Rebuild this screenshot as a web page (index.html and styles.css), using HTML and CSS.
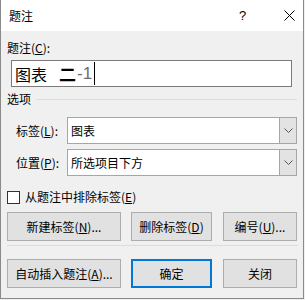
FILE: index.html
```html
<!DOCTYPE html>
<html>
<head>
<meta charset="utf-8">
<link rel="stylesheet" href="styles.css">
</head>
<body>
<div class="window">
  <div class="titlebar">
    <span class="title">题注</span>
    <span class="help">?</span>
    <svg class="close" width="11" height="11" viewBox="0 0 11 11"><path d="M0.5 0.5 L10.5 10.5 M10.5 0.5 L0.5 10.5" stroke="#000" stroke-width="1" fill="none"/></svg>
  </div>
  <div class="content">
    <div class="label-top">题注(<u>C</u>):</div>
    <div class="caption-box"><span class="cap-main">图表</span><span class="cap-bold">二</span><span class="cap-num">-1</span><span class="caret"></span></div>
    <div class="group-head"><span>选项</span><span class="group-line"></span></div>
    <div class="field-row first">
      <span class="field-label">标签(<u>L</u>):</span>
      <div class="combo"><span class="combo-text">图表</span><span class="combo-btn"><svg width="9" height="5" viewBox="0 0 9 5"><polyline points="0.5,0.5 4.5,4.5 8.5,0.5" fill="none" stroke="#555" stroke-width="1"/></svg></span></div>
    </div>
    <div class="field-row second">
      <span class="field-label">位置(<u>P</u>):</span>
      <div class="combo"><span class="combo-text">所选项目下方</span><span class="combo-btn"><svg width="9" height="5" viewBox="0 0 9 5"><polyline points="0.5,0.5 4.5,4.5 8.5,0.5" fill="none" stroke="#555" stroke-width="1"/></svg></span></div>
    </div>
    <div class="check-row"><span class="checkbox"></span><span>从题注中排除标签(<u>E</u>)</span></div>
    <div class="btn-row top">
      <button class="btn wide">新建标签(<u>N</u>)...</button>
      <button class="btn mid">删除标签(<u>D</u>)</button>
      <button class="btn narrow">编号(<u>U</u>)...</button>
    </div>
    <div class="sep"></div>
    <div class="btn-row bottom">
      <button class="btn wide">自动插入题注(<u>A</u>)...</button>
      <button class="btn mid default">确定</button>
      <button class="btn narrow">关闭</button>
    </div>
  </div>
</div>
</body>
</html>
```
FILE: styles.css
```css
* { box-sizing: border-box; }
html, body { margin: 0; padding: 0; background: #f0f0f0; }
body {
  width: 305px;
  height: 300px;
  overflow: hidden;
  font-family: "Noto Sans CJK SC", "Noto Sans", sans-serif;
  font-size: 12px;
  color: #000;
}
.window {
  width: 304px;
  height: 299px;
  background: #f0f0f0;
  border-left: 1px solid #8a8a8a;
  border-right: 1px solid #8a8a8a;
  border-bottom: 1px solid #8a8a8a;
}
.titlebar {
  height: 31px;
  background: #fff;
  display: flex;
  align-items: center;
  position: relative;
}
.title { margin-left: 8px; font-size: 12px; line-height: 16px; }
.help {
  margin-left: 206px;
  font-family: "Liberation Sans", sans-serif;
  font-size: 13px;
  line-height: 16px;
}
.close { margin-left: 38px; }
.content { padding: 0 6px 0 6px; }
.label-top { margin-top: 9px; line-height: 16px; }
.caption-box {
  margin-top: 4px;
  margin-left: 4px;
  width: 281px;
  height: 27px;
  background: #fff;
  border: 1px solid #7a7a7a;
  display: flex;
  align-items: center;
  padding-left: 3px;
  font-size: 16px;
  line-height: 22px;
}
.cap-bold { margin-left: 12px; font-weight: bold; font-size: 17px; }
.cap-num { color: #6d6d6d; margin-left: 1px; font-family: "Liberation Sans", sans-serif; font-size: 17px; }
.caret { display: inline-block; width: 1px; height: 23px; background: #000; margin-left: 2px; }
.group-head {
  margin-top: 4px;
  display: flex;
  align-items: center;
  line-height: 16px;
}
.group-line { flex: 1; height: 1px; background: #dcdcdc; margin-left: 5px; margin-right: 0; }
.field-row { display: flex; align-items: center; padding-left: 9px; }
.field-row.first { margin-top: 10px; }
.field-row.second { margin-top: 5px; }
.field-label { width: 51px; line-height: 16px; }
.combo {
  width: 230px;
  height: 27px;
  background: #fff;
  border: 1px solid #a6a6a6;
  display: flex;
  align-items: center;
}
.combo-text { flex: 1; padding-left: 3px; line-height: 16px; }
.combo-btn {
  width: 17px;
  height: 25px;
  background: #e3e3e3;
  border-left: 1px solid #a6a6a6;
  display: flex;
  align-items: center;
  justify-content: center;
}
.check-row { margin-top: 13px; display: flex; align-items: center; line-height: 16px; }
.checkbox {
  width: 13px; height: 13px;
  border: 1px solid #333;
  background: #fff;
  margin-right: 5px;
}
.btn-row { display: flex; }
.btn-row.top { margin-top: 7px; }
.btn-row.bottom { margin-top: 13px; }
.btn {
  height: 29px;
  background: #e1e1e1;
  border: 1px solid #adadad;
  font-family: "Noto Sans CJK SC", "Noto Sans", sans-serif;
  font-size: 12px;
  line-height: 16px;
  color: #000;
  padding: 0;
  margin: 0;
}
.btn.wide { width: 114px; }
.btn.mid { width: 81px; margin-left: 10px; }
.btn.narrow { width: 74px; margin-left: 11px; }
.btn.default { border: 2px solid #0078d7; }
.sep { margin-top: 4px; height: 1px; background: #dcdcdc; width: 291px; }
```
